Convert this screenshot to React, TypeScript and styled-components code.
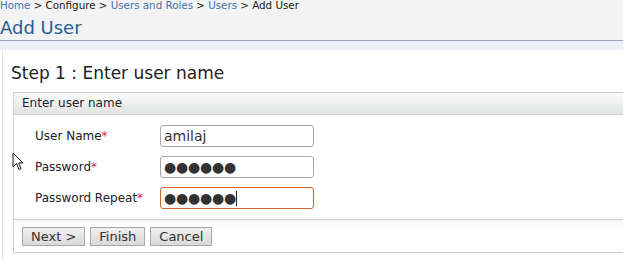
import React from "react";
import styled, { createGlobalStyle } from "styled-components";

const Global = createGlobalStyle`
  html, body { margin: 0; padding: 0; background: #fff; overflow: hidden; }
  body { font-family: "DejaVu Sans", Verdana, sans-serif; }
`;

const Page = styled.div`
  position: relative;
  width: 623px;
  height: 261px;
  overflow: hidden;
  background: #fff;
`;

const Header = styled.div`
  background: #f3f3f3;
  height: 40px;
  border-bottom: 1px solid #9ba4b4;
  display: flex;
  flex-direction: column;
`;

const Breadcrumb = styled.div`
  font-size: 10.3px;
  line-height: 12px;
  margin-top: -1px;
  color: #222;
  white-space: nowrap;
`;

const Crumb = styled.a`
  color: #4a70a8;
  text-decoration: none;
`;

const Title = styled.h1`
  margin: 6px 0 0 0;
  font-size: 18px;
  line-height: 22px;
  font-weight: normal;
  color: #2a5d8f;
`;

const Band = styled.div`
  height: 9px;
  background: #eef0f7;
`;

const Content = styled.div`
  margin-left: 2px;
  border-left: 1px solid #e4e4e4;
  padding: 12px 0 0 7px;
  height: 220px;
`;

const StepTitle = styled.h2`
  margin: 0 0 0 1px;
  font-size: 17px;
  line-height: 22px;
  font-weight: normal;
  color: #222;
`;

const Box = styled.div`
  margin: 8px -20px 0 3px;
  border: 1px solid #cfcfcf;
`;

const BoxHeader = styled.div`
  height: 21px;
  line-height: 21px;
  padding-left: 8px;
  font-size: 12px;
  color: #222;
  background: linear-gradient(#fbfbfb, #e1e3e3);
  border-bottom: 1px solid #d6d6d6;
`;

const Form = styled.div`
  display: grid;
  grid-template-columns: 125px 154px;
  row-gap: 9px;
  align-items: center;
  padding: 10px 0 10px 21px;
  border-bottom: 1px solid #cfcfcf;
`;

const Label = styled.label`
  font-size: 12px;
  color: #222;
`;

const Req = styled.span`
  color: #e0302a;
`;

const FieldWrap = styled.div`
  position: relative;
  height: 22px;
`;

const Input = styled.input<{ $active?: boolean; $dots?: boolean }>`
  box-sizing: border-box;
  width: 154px;
  height: 22px;
  margin: 0;
  padding: 0 0 0 3px;
  border: 1px solid ${(p) => (p.$active ? "#d2652f" : "#aaaaaa")};
  border-radius: 3px;
  font-family: "DejaVu Sans", Verdana, sans-serif;
  font-size: 14px;
  letter-spacing: ${(p) => (p.$dots ? "-0.2px" : "0")};
  color: #333;
  background: #fff;
  outline: none;
`;

const Caret = styled.span`
  position: absolute;
  left: 76px;
  top: 4px;
  width: 1px;
  height: 15px;
  background: #222;
`;

const Actions = styled.div`
  display: flex;
  gap: 5px;
  padding: 7px 0 6px 8px;
  background: linear-gradient(#f6f6f6, #fff 8px);
`;

const Button = styled.button`
  box-sizing: border-box;
  height: 19px;
  padding: 0 8px;
  font-family: "DejaVu Sans", Verdana, sans-serif;
  font-size: 13px;
  line-height: 17px;
  color: #333;
  background: linear-gradient(#f0f0f0, #d9d9d9);
  border: 1px solid #a8a8a8;
  border-radius: 0;
`;

const Pointer = styled.svg`
  position: absolute;
  left: 12px;
  top: 152px;
`;

export default function App() {
  return (
    <Page>
      <Global />
      <Header>
        <Breadcrumb>
          <Crumb href="#">Home</Crumb> &gt; Configure &gt; <Crumb href="#">Users and Roles</Crumb> &gt;{" "}
          <Crumb href="#">Users</Crumb> &gt; Add User
        </Breadcrumb>
        <Title>Add User</Title>
      </Header>
      <Band />
      <Content>
        <StepTitle>Step 1 : Enter user name</StepTitle>
        <Box>
          <BoxHeader>Enter user name</BoxHeader>
          <Form>
            <Label>
              User Name<Req>*</Req>
            </Label>
            <FieldWrap>
              <Input readOnly defaultValue="amilaj" />
            </FieldWrap>
            <Label>
              Password<Req>*</Req>
            </Label>
            <FieldWrap>
              <Input $dots readOnly defaultValue="●●●●●●" />
            </FieldWrap>
            <Label>
              Password Repeat<Req>*</Req>
            </Label>
            <FieldWrap>
              <Input $dots $active readOnly defaultValue="●●●●●●" />
              <Caret />
            </FieldWrap>
          </Form>
          <Actions>
            <Button>Next &gt;</Button>
            <Button>Finish</Button>
            <Button>Cancel</Button>
          </Actions>
        </Box>
      </Content>
      <Pointer width="12" height="20" viewBox="0 0 12 20">
        <path d="M1 1 L1 15 L4.5 11.5 L7 17.5 L9 16.6 L6.6 11 L11 11 Z" fill="#fff" stroke="#111" strokeWidth="1" strokeLinejoin="round" />
      </Pointer>
    </Page>
  );
}
